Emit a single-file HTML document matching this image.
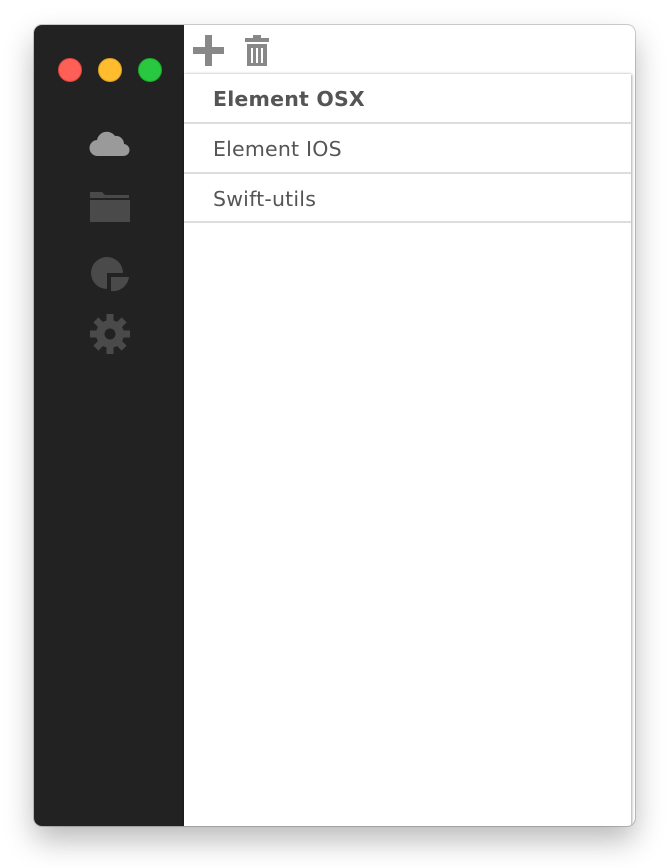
<!DOCTYPE html>
<html><head><style>
html,body{margin:0;padding:0;background:#fff;width:668px;height:868px;overflow:hidden}
.win{position:absolute;left:34px;top:25px;width:601px;height:801px;border-radius:8px;background:#fff;box-shadow:0 14px 30px rgba(0,0,0,.28),0 0 0 1px rgba(0,0,0,.18);overflow:hidden}
.side{position:absolute;left:0;top:0;width:150px;height:801px;background:#222}
.dot{position:absolute;top:33px;width:22px;height:22px;border-radius:50%}
.main{position:absolute;left:150px;top:49px;width:447px;height:752px;background:#fff;box-shadow:0 1px 3px rgba(0,0,0,.3),1px 0 3px rgba(0,0,0,.2)}
.row{height:48px;border-bottom:2px solid #ddd;font:20.5px "DejaVu Sans","Liberation Sans",sans-serif;color:#555;line-height:51px;padding-left:29px;letter-spacing:0.2px}
.row.last{height:47px}
svg{position:absolute}
</style></head><body>
<div class="win">
<div class="side">
<div class="dot" style="left:24px;background:#fe5f57;border:1px solid #e0443e"></div>
<div class="dot" style="left:64px;background:#febc2e;border:1px solid #dea123"></div>
<div class="dot" style="left:104px;background:#28c840;border:1px solid #1aab29"></div>
<svg style="left:55px;top:103px" width="42" height="30" viewBox="0 0 42 30"><path d="M9 28a8 8 0 0 1-1-16 10 10 0 0 1 18-4 8 8 0 0 1 9 8 6 6 0 0 1-1 12z" fill="#9a9a9a"/></svg>
<svg style="left:55px;top:163px" width="42" height="36" viewBox="0 0 42 36"><path d="M1 4h12l3 3h24v3H1z M1 12h40v22H1z" fill="#4a4a4a"/></svg>
<svg style="left:55px;top:228px" width="42" height="40" viewBox="0 0 42 40"><path d="M18 4a16 16 0 1 0 0 32V20h16A16 16 0 0 0 18 4z" fill="#4a4a4a"/><path d="M22 24h18a16 16 0 0 1-18 14z" fill="#4a4a4a"/></svg>
<svg style="left:55px;top:288px" width="42" height="42" viewBox="0 0 42 42"><g fill="#4a4a4a" transform="translate(21 21)"><circle r="14"/><g id="t"><rect x="-3.5" y="-20" width="7" height="8"/></g><use href="#t" transform="rotate(45)"/><use href="#t" transform="rotate(90)"/><use href="#t" transform="rotate(135)"/><use href="#t" transform="rotate(180)"/><use href="#t" transform="rotate(225)"/><use href="#t" transform="rotate(270)"/><use href="#t" transform="rotate(315)"/></g><circle cx="21" cy="21" r="5.5" fill="#222"/></svg>
</div>
<svg style="left:158px;top:9px" width="34" height="34" viewBox="0 0 34 34"><path d="M13 1h7v12h12v7H20v12h-7V20H1v-7h12z" fill="#888"/></svg>
<svg style="left:210px;top:9px" width="26" height="34" viewBox="0 0 26 34"><path d="M9 1h8v3h8v4H1V4h8z" fill="#888"/><path d="M3 10h20v22H3z" fill="#888"/><path d="M8 14v15M13 14v15M18 14v15" stroke="#fff" stroke-width="2"/></svg>
<div class="main">
<div class="row" style="font-weight:bold">Element OSX</div>
<div class="row">Element IOS</div>
<div class="row last">Swift-utils</div>
</div>
</div>
</body></html>
